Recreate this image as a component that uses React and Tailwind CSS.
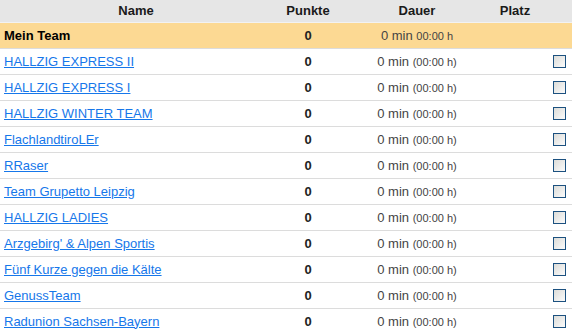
import React from "react";

const teams = [
  "HALLZIG EXPRESS II",
  "HALLZIG EXPRESS I",
  "HALLZIG WINTER TEAM",
  "FlachlandtiroLEr",
  "RRaser",
  "Team Grupetto Leipzig",
  "HALLZIG LADIES",
  "Arzgebirg' & Alpen Sportis",
  "Fünf Kurze gegen die Kälte",
  "GenussTeam",
  "Radunion Sachsen-Bayern",
];

const cols = "grid grid-cols-[272px_72px_146px_50px_32px]";

const Checkbox = () => (
  <span className="block w-[13px] h-[13px] border border-[#1c5180] bg-gradient-to-br from-[#dcdcd8] to-[#fbfbfb]" />
);

const App = () => {
  return (
    <div className="w-[572px] h-[334px] overflow-hidden bg-white text-[13px] font-['Liberation_Sans',Arial,sans-serif]">
      {/* Header */}
      <div className={`${cols} h-[23px] items-center bg-[#e6e6e6] border-b border-[#f2f2f2] font-bold text-[#1a1a1a]`}>
        <div className="text-center">Name</div>
        <div className="text-center">Punkte</div>
        <div className="text-center">Dauer</div>
        <div className="text-center">Platz</div>
        <div />
      </div>

      {/* Mein Team */}
      <div className={`${cols} h-[26px] items-center bg-[#fcd993] border-b border-[#dcdcdc]`}>
        <div className="pl-1 font-bold text-black">Mein Team</div>
        <div className="text-center font-bold text-[#222]">0</div>
        <div className="text-center text-[#444]">
          0 min <span className="text-[11px]">00:00 h</span>
        </div>
        <div />
        <div />
      </div>

      {teams.map((team) => (
        <div key={team} className={`${cols} h-[26px] items-center border-b border-[#dcdcdc]`}>
          <div className="pl-1">
            <a href="#" className="text-[#1677ea] underline">
              {team}
            </a>
          </div>
          <div className="text-center font-bold text-[#222]">0</div>
          <div className="text-center text-[#444]">
            0 min <span className="text-[11px]">(00:00 h)</span>
          </div>
          <div />
          <div className="flex items-center pl-[13px]">
            <Checkbox />
          </div>
        </div>
      ))}
    </div>
  );
};

export default App;
